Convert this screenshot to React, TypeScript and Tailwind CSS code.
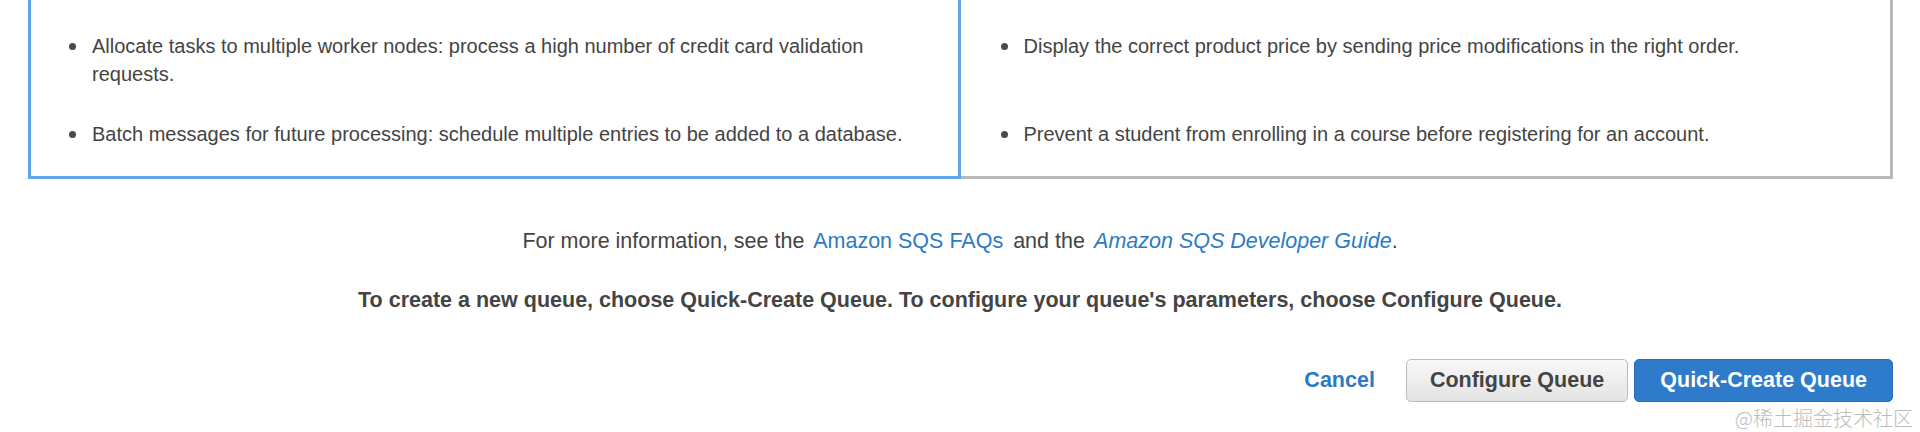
import React from 'react';

const leftItems = [
  'Allocate tasks to multiple worker nodes: process a high number of credit card validation requests.',
  'Batch messages for future processing: schedule multiple entries to be added to a database.',
];

const rightItems = [
  'Display the correct product price by sending price modifications in the right order.',
  'Prevent a student from enrolling in a course before registering for an account.',
];

function Bullet({ text }: { text: string }) {
  return (
    <div className="flex items-start">
      <span className="mt-[11px] w-[7px] h-[7px] rounded-full bg-[#4a4a4a] shrink-0" />
      <span className="ml-[16px]">{text}</span>
    </div>
  );
}

export default function App() {
  return (
    <div className="relative w-[1920px] h-[432px] bg-white text-[#444] font-['Liberation_Sans',Arial,sans-serif]">
      {/* Queue type cards (selected one on the left) */}
      <div className="grid grid-cols-2 ml-[28px] mr-[27px] text-[20px] leading-[28px]">
        <div className="border-x-[3px] border-[#5ea8e7] pt-[32px] pl-[38px] pr-[30px]">
          <Bullet text={leftItems[0]} />
        </div>
        <div className="border-r-[3px] border-[#b8b8b8] pt-[32px] pl-[40px] pr-[30px]">
          <Bullet text={rightItems[0]} />
        </div>
        <div className="border-x-[3px] border-b-[3px] border-[#5ea8e7] pt-[32px] pb-[28px] pl-[38px] pr-[30px]">
          <Bullet text={leftItems[1]} />
        </div>
        <div className="border-r-[3px] border-b-[3px] border-[#b8b8b8] pt-[32px] pb-[28px] pl-[40px] pr-[30px]">
          <Bullet text={rightItems[1]} />
        </div>
      </div>

      <p className="mt-[47px] text-center text-[21.5px] leading-[30px]">
        For more information, see the
        <a className="mx-[4px] text-[#2b7bc6]" href="#"> Amazon SQS FAQs </a>
        and the
        <a className="ml-[4px] italic text-[#2b7bc6]" href="#"> Amazon SQS Developer Guide</a>.
      </p>

      <p className="mt-[29px] text-center text-[21.5px] leading-[30px] font-bold">
        To create a new queue, choose Quick-Create Queue. To configure your queue's parameters, choose Configure Queue.
      </p>

      <div className="mt-[44px] flex justify-end items-center pr-[27px] text-[21.5px] font-bold">
        <button className="mr-[31px] text-[#2b7bc6] font-bold">Cancel</button>
        <button className="h-[43px] px-[23px] rounded-[5px] border border-[#bcbcbc] bg-gradient-to-b from-[#f8f8f8] to-[#e3e3e3] text-[#444]">
          Configure Queue
        </button>
        <button className="ml-[6px] h-[43px] px-[25px] rounded-[5px] border border-[#2a6fb9] bg-[#2e7bcc] text-white">
          Quick-Create Queue
        </button>
      </div>

      {/* watermark */}
      <span className="absolute right-[7px] top-[405px] text-[20px] leading-[26px] text-[#bdbdbd] font-['Noto_Sans_CJK_SC',sans-serif] font-light">
        @稀土掘金技术社区
      </span>
    </div>
  );
}
